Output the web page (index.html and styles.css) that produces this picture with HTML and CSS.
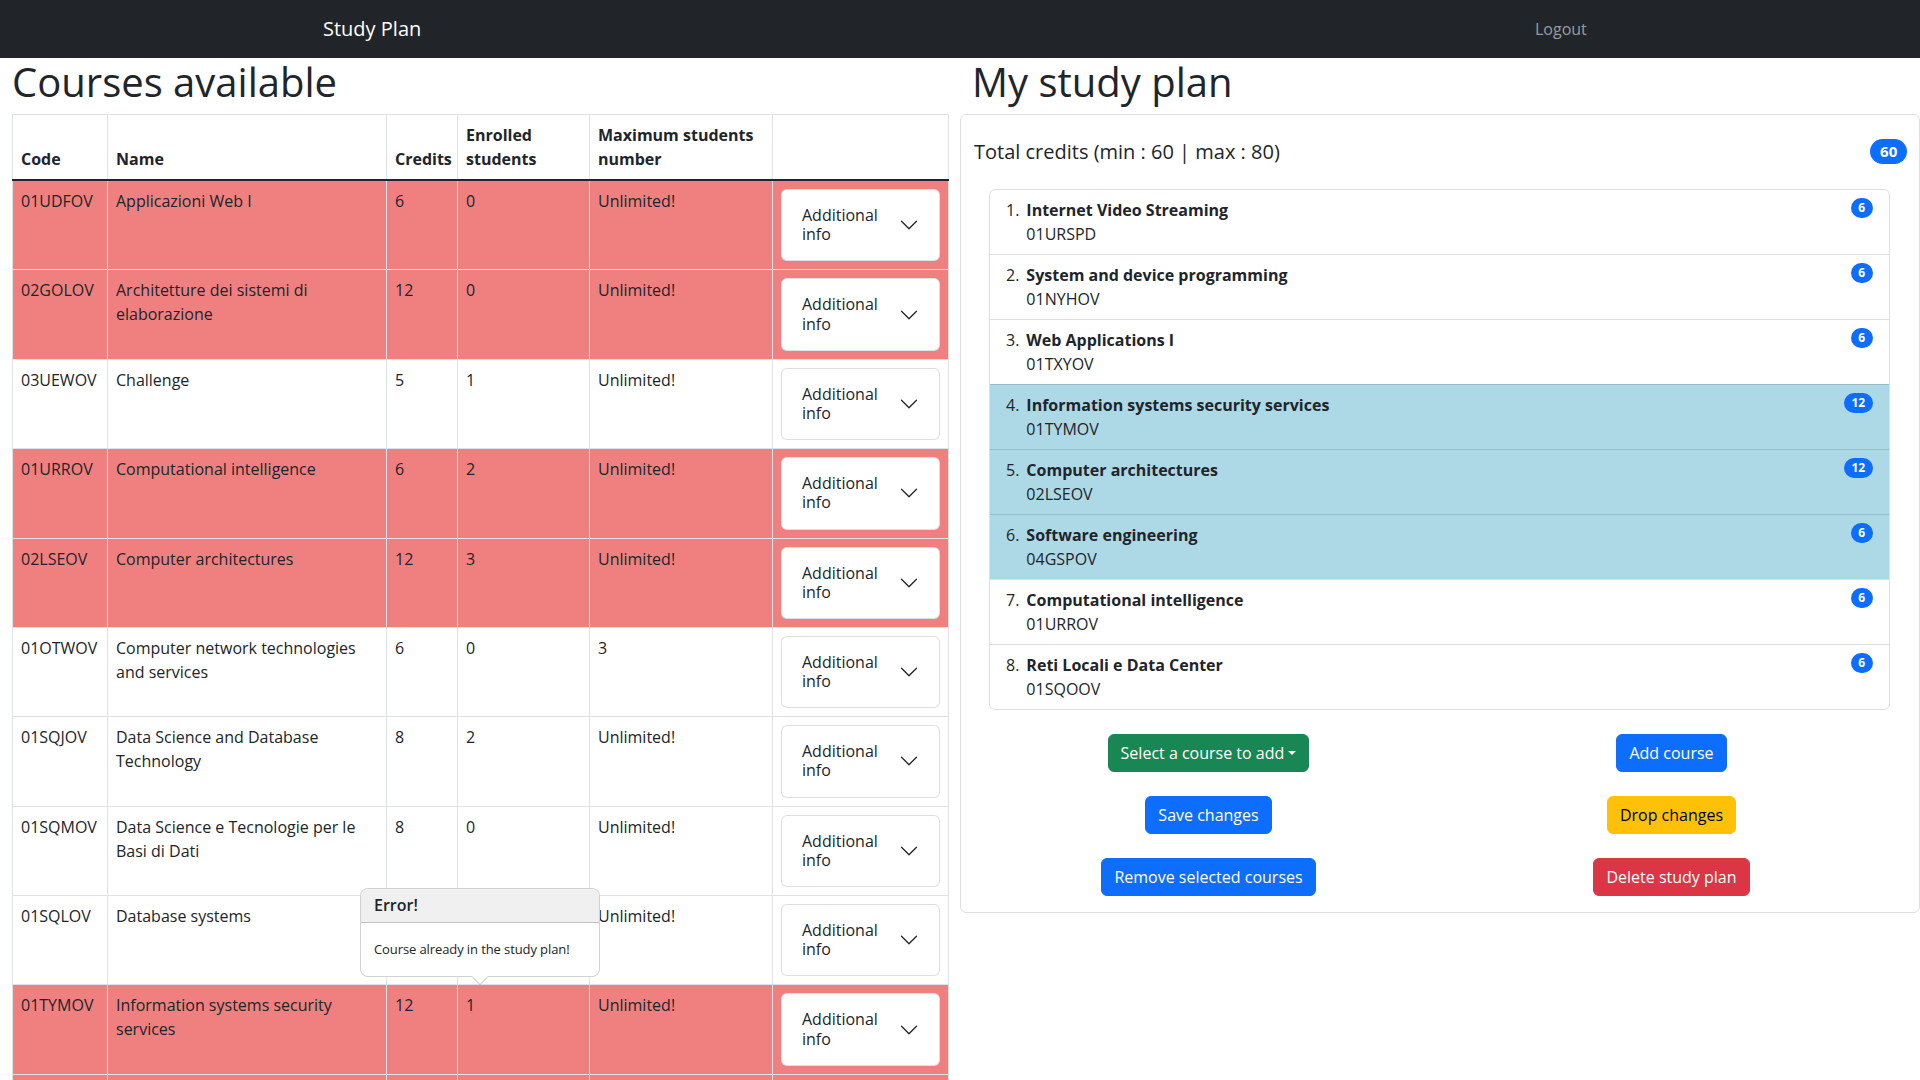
FILE: index.html
```html
<!DOCTYPE html>
<html lang="en">
<head>
<meta charset="utf-8">
<title>Study Plan</title>
<link rel="stylesheet" href="styles.css">
</head>
<body>
<nav class="navbar">
  <div class="nav-left"><span class="brand">Study Plan</span></div>
  <div class="nav-right"><a class="nav-link">Logout</a></div>
</nav>
<main class="layout">
  <section class="col-left">
    <h1 class="page-title">Courses available</h1>
    <div class="table-wrap">
      <table class="courses">
        <colgroup>
          <col class="c-code"><col class="c-name"><col class="c-cred"><col class="c-enr"><col class="c-max"><col class="c-info">
        </colgroup>
        <thead>
          <tr><th>Code</th><th>Name</th><th>Credits</th><th>Enrolled students</th><th>Maximum students number</th><th></th></tr>
        </thead>
        <tbody>
          <tr class="taken"><td>01UDFOV</td><td>Applicazioni Web I</td><td>6</td><td>0</td><td>Unlimited!</td><td><div class="acc-item"><button class="acc-btn"><span>Additional info</span><svg class="chev" viewBox="0 0 16 16"><path fill="#212529" fill-rule="evenodd" d="M1.646 4.646a.5.5 0 0 1 .708 0L8 10.293l5.646-5.647a.5.5 0 0 1 .708.708l-6 6a.5.5 0 0 1-.708 0l-6-6a.5.5 0 0 1 0-.708z"/></svg></button></div></td></tr>
          <tr class="taken"><td>02GOLOV</td><td>Architetture dei sistemi di elaborazione</td><td>12</td><td>0</td><td>Unlimited!</td><td><div class="acc-item"><button class="acc-btn"><span>Additional info</span><svg class="chev" viewBox="0 0 16 16"><path fill="#212529" fill-rule="evenodd" d="M1.646 4.646a.5.5 0 0 1 .708 0L8 10.293l5.646-5.647a.5.5 0 0 1 .708.708l-6 6a.5.5 0 0 1-.708 0l-6-6a.5.5 0 0 1 0-.708z"/></svg></button></div></td></tr>
          <tr><td>03UEWOV</td><td>Challenge</td><td>5</td><td>1</td><td>Unlimited!</td><td><div class="acc-item"><button class="acc-btn"><span>Additional info</span><svg class="chev" viewBox="0 0 16 16"><path fill="#212529" fill-rule="evenodd" d="M1.646 4.646a.5.5 0 0 1 .708 0L8 10.293l5.646-5.647a.5.5 0 0 1 .708.708l-6 6a.5.5 0 0 1-.708 0l-6-6a.5.5 0 0 1 0-.708z"/></svg></button></div></td></tr>
          <tr class="taken"><td>01URROV</td><td>Computational intelligence</td><td>6</td><td>2</td><td>Unlimited!</td><td><div class="acc-item"><button class="acc-btn"><span>Additional info</span><svg class="chev" viewBox="0 0 16 16"><path fill="#212529" fill-rule="evenodd" d="M1.646 4.646a.5.5 0 0 1 .708 0L8 10.293l5.646-5.647a.5.5 0 0 1 .708.708l-6 6a.5.5 0 0 1-.708 0l-6-6a.5.5 0 0 1 0-.708z"/></svg></button></div></td></tr>
          <tr class="taken"><td>02LSEOV</td><td>Computer architectures</td><td>12</td><td>3</td><td>Unlimited!</td><td><div class="acc-item"><button class="acc-btn"><span>Additional info</span><svg class="chev" viewBox="0 0 16 16"><path fill="#212529" fill-rule="evenodd" d="M1.646 4.646a.5.5 0 0 1 .708 0L8 10.293l5.646-5.647a.5.5 0 0 1 .708.708l-6 6a.5.5 0 0 1-.708 0l-6-6a.5.5 0 0 1 0-.708z"/></svg></button></div></td></tr>
          <tr><td>01OTWOV</td><td>Computer network technologies and services</td><td>6</td><td>0</td><td>3</td><td><div class="acc-item"><button class="acc-btn"><span>Additional info</span><svg class="chev" viewBox="0 0 16 16"><path fill="#212529" fill-rule="evenodd" d="M1.646 4.646a.5.5 0 0 1 .708 0L8 10.293l5.646-5.647a.5.5 0 0 1 .708.708l-6 6a.5.5 0 0 1-.708 0l-6-6a.5.5 0 0 1 0-.708z"/></svg></button></div></td></tr>
          <tr><td>01SQJOV</td><td>Data Science and Database Technology</td><td>8</td><td>2</td><td>Unlimited!</td><td><div class="acc-item"><button class="acc-btn"><span>Additional info</span><svg class="chev" viewBox="0 0 16 16"><path fill="#212529" fill-rule="evenodd" d="M1.646 4.646a.5.5 0 0 1 .708 0L8 10.293l5.646-5.647a.5.5 0 0 1 .708.708l-6 6a.5.5 0 0 1-.708 0l-6-6a.5.5 0 0 1 0-.708z"/></svg></button></div></td></tr>
          <tr><td>01SQMOV</td><td>Data Science e Tecnologie per le Basi di Dati</td><td>8</td><td>0</td><td>Unlimited!</td><td><div class="acc-item"><button class="acc-btn"><span>Additional info</span><svg class="chev" viewBox="0 0 16 16"><path fill="#212529" fill-rule="evenodd" d="M1.646 4.646a.5.5 0 0 1 .708 0L8 10.293l5.646-5.647a.5.5 0 0 1 .708.708l-6 6a.5.5 0 0 1-.708 0l-6-6a.5.5 0 0 1 0-.708z"/></svg></button></div></td></tr>
          <tr><td>01SQLOV</td><td>Database systems</td><td></td><td></td><td>Unlimited!</td><td><div class="acc-item"><button class="acc-btn"><span>Additional info</span><svg class="chev" viewBox="0 0 16 16"><path fill="#212529" fill-rule="evenodd" d="M1.646 4.646a.5.5 0 0 1 .708 0L8 10.293l5.646-5.647a.5.5 0 0 1 .708.708l-6 6a.5.5 0 0 1-.708 0l-6-6a.5.5 0 0 1 0-.708z"/></svg></button></div></td></tr>
          <tr class="taken"><td>01TYMOV</td><td>Information systems security services</td><td>12</td><td>1</td><td>Unlimited!</td><td><div class="acc-item"><button class="acc-btn"><span>Additional info</span><svg class="chev" viewBox="0 0 16 16"><path fill="#212529" fill-rule="evenodd" d="M1.646 4.646a.5.5 0 0 1 .708 0L8 10.293l5.646-5.647a.5.5 0 0 1 .708.708l-6 6a.5.5 0 0 1-.708 0l-6-6a.5.5 0 0 1 0-.708z"/></svg></button></div></td></tr>
          <tr class="taken filler"><td></td><td></td><td></td><td></td><td></td><td></td></tr>
        </tbody>
      </table>
      <div class="popover">
        <div class="popover-header">Error!</div>
        <div class="popover-body">Course already in the study plan!</div>
        <span class="popover-arrow"></span>
      </div>
    </div>
  </section>
  <section class="col-right">
    <h1 class="page-title">My study plan</h1>
    <div class="card">
      <div class="credits-row">
        <span class="credits-title">Total credits (min : 60 | max : 80)</span>
        <span class="badge badge-lg">60</span>
      </div>
      <ol class="plan-list">
        <li class="plan-item"><span class="num">1.</span><div class="plan-text"><div class="plan-title">Internet Video Streaming</div><div>01URSPD</div></div><span class="badge">6</span></li>
        <li class="plan-item"><span class="num">2.</span><div class="plan-text"><div class="plan-title">System and device programming</div><div>01NYHOV</div></div><span class="badge">6</span></li>
        <li class="plan-item"><span class="num">3.</span><div class="plan-text"><div class="plan-title">Web Applications I</div><div>01TXYOV</div></div><span class="badge">6</span></li>
        <li class="plan-item selected"><span class="num">4.</span><div class="plan-text"><div class="plan-title">Information systems security services</div><div>01TYMOV</div></div><span class="badge">12</span></li>
        <li class="plan-item selected"><span class="num">5.</span><div class="plan-text"><div class="plan-title">Computer architectures</div><div>02LSEOV</div></div><span class="badge">12</span></li>
        <li class="plan-item selected"><span class="num">6.</span><div class="plan-text"><div class="plan-title">Software engineering</div><div>04GSPOV</div></div><span class="badge">6</span></li>
        <li class="plan-item"><span class="num">7.</span><div class="plan-text"><div class="plan-title">Computational intelligence</div><div>01URROV</div></div><span class="badge">6</span></li>
        <li class="plan-item"><span class="num">8.</span><div class="plan-text"><div class="plan-title">Reti Locali e Data Center</div><div>01SQOOV</div></div><span class="badge">6</span></li>
      </ol>
      <div class="actions">
        <button class="btn btn-success dropdown-toggle">Select a course to add</button>
        <button class="btn btn-primary">Add course</button>
        <button class="btn btn-primary">Save changes</button>
        <button class="btn btn-warning">Drop changes</button>
        <button class="btn btn-primary">Remove selected courses</button>
        <button class="btn btn-danger">Delete study plan</button>
      </div>
    </div>
  </section>
</main>
</body>
</html>
```

FILE: styles.css
```css
* { box-sizing: border-box; }
html { scrollbar-width: none; }
body {
  margin: 0;
  font-family: "Open Sans", "Noto Sans", sans-serif;
  font-size: 16px;
  line-height: 1.5;
  color: #212529;
  background: #fff;
  overflow: hidden;
}

/* navbar */
.navbar {
  height: 58px;
  background: #212529;
  display: grid;
  grid-template-columns: 960px 960px;
  align-items: center;
}
.brand {
  display: inline-block;
  padding-left: 323px;
  font-size: 20px;
  line-height: 30px;
  color: #fff;
}
.nav-link {
  display: inline-block;
  padding-left: 575px;
  color: rgba(255, 255, 255, 0.55);
  font-size: 16px;
}

/* layout */
.layout {
  display: grid;
  grid-template-columns: 960px 960px;
  align-items: start;
}
.col-left { padding: 0 12px; }
.page-title {
  margin: 0 0 8px;
  font-size: 40px;
  font-weight: 500;
  line-height: 48px;
}
.col-right .page-title { padding-left: 12px; }

/* table */
.table-wrap { position: relative; }
.courses {
  width: 936px;
  table-layout: fixed;
  border-collapse: collapse;
}
.c-code { width: 95px; }
.c-name { width: 279px; }
.c-cred { width: 71px; }
.c-enr { width: 132px; }
.c-max { width: 183px; }
.c-info { width: 176px; }
.courses th,
.courses td {
  border: 1px solid #dee2e6;
  padding: 8px;
  vertical-align: top;
  text-align: left;
}
.courses thead th {
  vertical-align: bottom;
  font-weight: 700;
  border-bottom: 2px solid #212529;
}
.courses tr.taken td { background: #f08080; }
.courses tr.filler td { height: 89px; }

.acc-item {
  background: #fff;
  border: 1px solid rgba(0, 0, 0, 0.125);
  border-radius: 6px;
}
.acc-btn {
  display: flex;
  align-items: center;
  width: 100%;
  padding: 16px 20px;
  font-family: inherit;
  font-size: 16px;
  line-height: 1.2;
  color: #212529;
  background: transparent;
  border: 0;
  text-align: left;
}
.acc-btn .chev {
  flex-shrink: 0;
  width: 20px;
  height: 20px;
  margin-left: auto;
}

/* popover */
.popover {
  position: absolute;
  left: 348px;
  top: 774px;
  width: 240px;
  background: #fff;
  border: 1px solid rgba(0, 0, 0, 0.175);
  border-radius: 8px;
  font-size: 13px;
}
.popover-header {
  padding: 7px 13px;
  font-size: 16px;
  font-weight: 600;
  line-height: 1.2;
  background: #f0f0f0;
  border-bottom: 1px solid rgba(0, 0, 0, 0.175);
  border-radius: 7px 7px 0 0;
}
.popover-body {
  padding: 16px 12px 16px 13px;
  line-height: 21px;
  white-space: nowrap;
  letter-spacing: -0.1px;
}
.popover-arrow {
  position: absolute;
  left: 111px;
  bottom: -9px;
  width: 16px;
  height: 8px;
}
.popover-arrow::before,
.popover-arrow::after {
  content: "";
  position: absolute;
  left: 0;
  border-style: solid;
  border-color: transparent;
  border-width: 8px 8px 0;
}
.popover-arrow::before { top: 0; border-top-color: rgba(0, 0, 0, 0.25); }
.popover-arrow::after { top: -1px; border-top-color: #fff; }

/* card */
.card {
  border: 1px solid rgba(0, 0, 0, 0.125);
  border-radius: 6px;
  padding: 16px;
}
.credits-row {
  display: flex;
  justify-content: space-between;
  align-items: center;
  height: 25px;
  margin: 8px -4px 25px -3px;
}
.credits-title {
  font-size: 20px;
  font-weight: 500;
  line-height: 24px;
}
.badge {
  display: inline-block;
  padding: 0.35em 0.65em;
  font-size: 12px;
  font-weight: 700;
  line-height: 1;
  color: #fff;
  background: #0d6efd;
  border-radius: 50rem;
  text-align: center;
}
.badge-lg { font-size: 15px; }

.plan-list {
  list-style: none;
  margin: 0 13px 0 12px;
  padding: 0;
  border: 1px solid rgba(0, 0, 0, 0.125);
  border-radius: 6px;
  overflow: hidden;
}
.plan-item {
  display: flex;
  align-items: flex-start;
  padding: 8px 16px;
  border-top: 1px solid rgba(0, 0, 0, 0.125);
}
.plan-item:first-child { border-top: 0; }
.plan-item.selected { background: #add8e6; }
.plan-text {
  margin-left: 7px;
  margin-right: auto;
}
.plan-title { font-weight: 700; }

.actions {
  display: grid;
  grid-template-columns: 1fr 1fr;
  row-gap: 24px;
  margin-top: 24px;
  justify-items: center;
}
.btn {
  padding: 6px 12px;
  font-family: inherit;
  font-size: 16px;
  line-height: 1.5;
  border: 1px solid transparent;
  border-radius: 6px;
  color: #fff;
}
.btn-success { background: #198754; border-color: #198754; }
.btn-primary { background: #0d6efd; border-color: #0d6efd; }
.btn-warning { background: #ffc107; border-color: #ffc107; color: #000; }
.btn-danger { background: #dc3545; border-color: #dc3545; }
.dropdown-toggle::after {
  content: "";
  display: inline-block;
  margin-left: 0.255em;
  vertical-align: 0.255em;
  border-top: 0.3em solid;
  border-right: 0.3em solid transparent;
  border-left: 0.3em solid transparent;
  border-bottom: 0;
}
```
